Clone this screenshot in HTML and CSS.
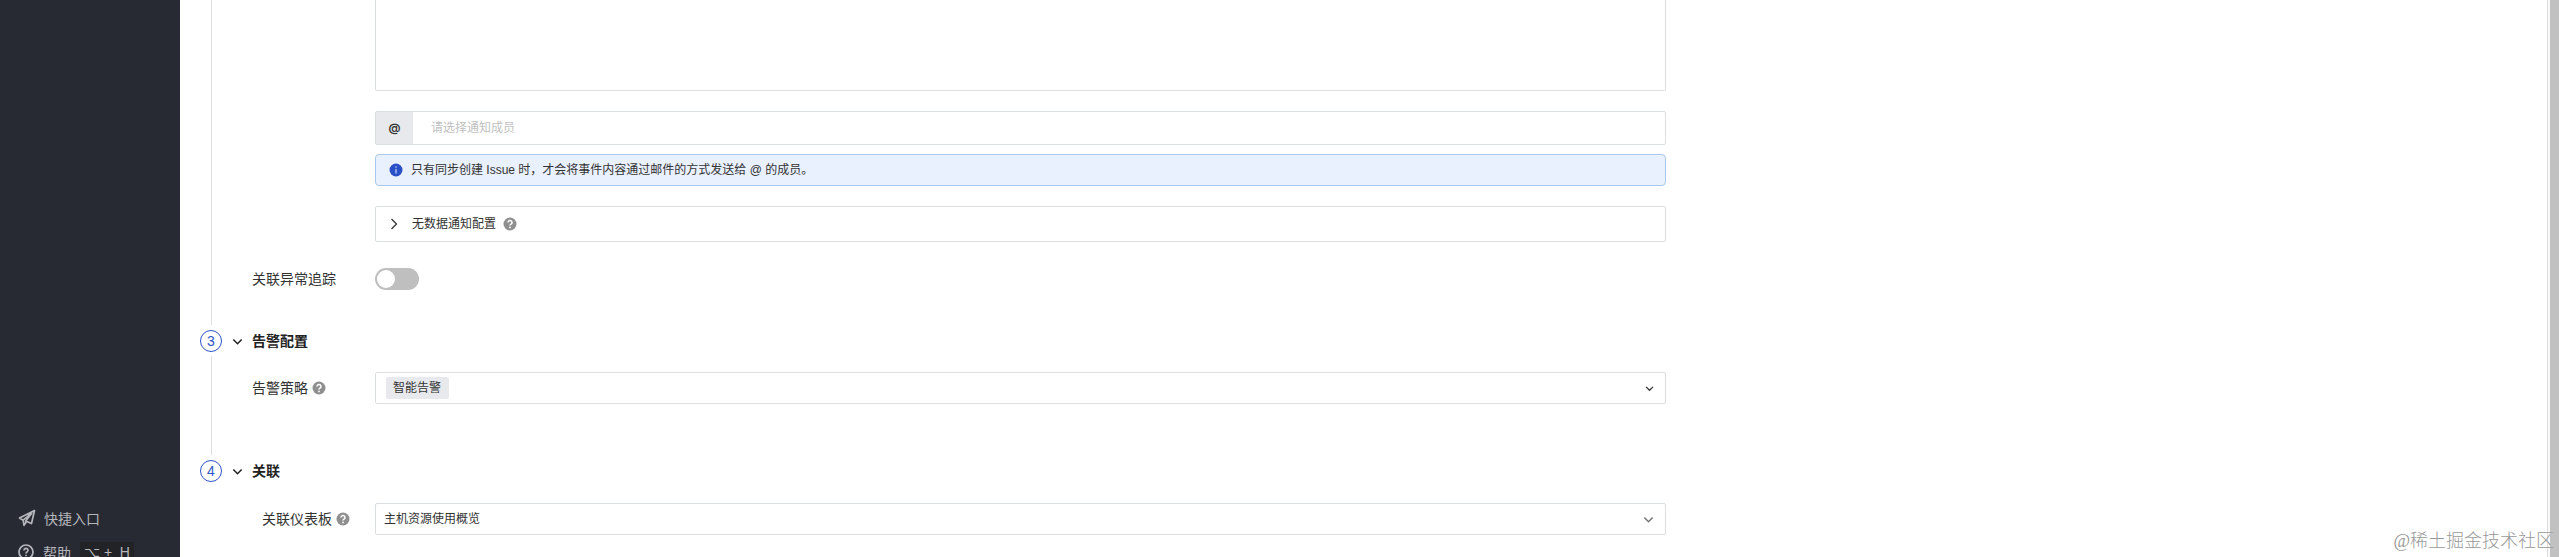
FILE: index.html
```html
<!DOCTYPE html>
<html lang="zh-CN">
<head>
  <meta charset="UTF-8" />
  <title>监控器</title>
  <link rel="stylesheet" href="styles.css">
</head>
<body>
  <svg class="sprite">
    <symbol id="help" viewBox="0 0 14 14">
      <circle cx="7" cy="7" r="6.5" fill="#8f8f8f" />
      <path d="M5 5.5a2 2 0 1 1 3 1.7c-.7.4-1 .7-1 1.3" fill="none" stroke="#fff" stroke-width="1.5" />
      <circle cx="7" cy="10.4" r=".9" fill="#fff" />
    </symbol>
    <symbol id="down" viewBox="0 0 10 10">
      <path d="M1.2 3.2 5 7l3.8-3.8" fill="none" stroke="currentColor" stroke-width="1.4" />
    </symbol>
  </svg>

  <div class="shell">
    <nav class="sidebar">
      <a href="#" class="nav-item">
        <svg width="18" height="18" viewBox="0 0 18 18" fill="none" stroke="currentColor" stroke-width="1.7" stroke-linejoin="round">
          <path d="M16.500 1.500 1.500 9l3.700 2.200 8.500-7-6 7.800 5.800 2.500zM5.200 11.200 6 16.300 8.400 12.800" />
        </svg>
        <span>快捷入口</span>
      </a>
      <a href="#" class="nav-item nav-help">
        <svg width="18" height="18" viewBox="0 0 18 18" fill="none" stroke="currentColor" stroke-width="1.7">
          <circle cx="8" cy="9" r="7" />
          <path d="M6 7.500a2 2 0 1 1 3 1.600c-.7.4-1 .8-1 1.400M8 11.800v1.400" />
        </svg>
        <span>帮助</span>
        <kbd>⌥ + &nbsp;H</kbd>
      </a>
    </nav>

    <main class="content">
      <form class="steps">
        <section class="step">
          <div class="rail"><i class="line"></i></div>
          <div class="step-body">
            <div class="row row-notify">
              <div></div>
              <div class="field">
                <textarea class="box editor" aria-label="事件内容"></textarea>
                <div class="box member">
                  <label class="addon" for="member">@</label>
                  <input type="text" id="member" placeholder="请选择通知成员">
                </div>
                <div class="notice">
                  <svg width="14" height="14" viewBox="0 0 14 14">
                    <circle cx="7" cy="7" r="6.500" fill="#2a50c8" />
                    <path d="M7 3.300v1.400M7 6v4.500" stroke="#a9c4f7" stroke-width="1.400" />
                  </svg>
                  <span>只有同步创建 Issue 时，才会将事件内容通过邮件的方式发送给 @ 的成员。</span>
                </div>
                <button type="button" class="box collapse">
                  <svg width="8" height="12" viewBox="0 0 8 12"><path d="M1.500 1 6.500 6l-5 5" fill="none" stroke="#333" stroke-width="1.300" /></svg>
                  <span>无数据通知配置</span>
                  <svg class="help"><use href="#help" /></svg>
                </button>
              </div>
            </div>
            <div class="row row-trace">
              <label class="label" for="trace">关联异常追踪</label>
              <input type="checkbox" id="trace" class="switch" role="switch">
            </div>
          </div>
        </section>

        <section class="step">
          <div class="rail"><span class="badge">3</span><i class="line"></i></div>
          <div class="step-body">
            <h2 class="step-title"><svg class="arrow"><use href="#down" /></svg>告警配置</h2>
            <div class="row row-policy">
              <label class="label" for="policy">告警策略 <svg class="help"><use href="#help" /></svg></label>
              <div class="box tags">
                <select id="policy" class="tag"><option>智能告警</option></select>
                <svg class="arrow arrow-small"><use href="#down" /></svg>
              </div>
            </div>
          </div>
        </section>

        <section class="step">
          <div class="rail"><span class="badge">4</span></div>
          <div class="step-body">
            <h2 class="step-title"><svg class="arrow"><use href="#down" /></svg>关联</h2>
            <div class="row row-dashboard">
              <label class="label label-sub" for="dashboard">关联仪表板 <svg class="help"><use href="#help" /></svg></label>
              <div class="box dashboard">
                <select id="dashboard"><option>主机资源使用概览</option></select>
                <svg class="arrow"><use href="#down" /></svg>
              </div>
            </div>
          </div>
        </section>
      </form>
    </main>
    <div class="scrollbar"></div>
  </div>
  <div class="watermark">@稀土掘金技术社区</div>
</body>
</html>
```
FILE: styles.css
```css
* {
  box-sizing: border-box;
}
body {
  margin: 0;
  font-family: "Liberation Sans", "Noto Sans CJK SC", sans-serif;
  font-size: 14px;
  color: #333;
  background: #fff;
}
input, select, textarea, button {
  font: inherit;
  font-size: 12px;
  color: inherit;
}
svg {
  flex: none;
}
.sprite {
  display: none;
}
.shell {
  display: flex;
  height: 100vh;
  overflow: hidden;
}

/* sidebar */
.sidebar {
  width: 180px;
  flex: none;
  display: flex;
  flex-direction: column;
  justify-content: flex-end;
  background: #282a33;
  margin-bottom: -12px;
}
.nav-item {
  display: flex;
  align-items: center;
  gap: 8px;
  height: 34px;
  padding-left: 18px;
  color: #b4b6bb;
  text-decoration: none;
}
.nav-help {
  gap: 7px;
}
kbd {
  font: inherit;
  line-height: 20px;
  padding: 0 4px;
  margin-left: 2px;
  background: #222327;
}

/* steps */
.content {
  flex: 1;
  padding-left: 20px;
}
.steps {
  max-width: 1466px;
}
.step {
  display: flex;
}
.rail {
  width: 22px;
  flex: none;
  display: flex;
  flex-direction: column;
  align-items: center;
}
.badge {
  width: 22px;
  height: 22px;
  line-height: 20px;
  text-align: center;
  border: 1px solid #2f54c8;
  border-radius: 50%;
  color: #2f54c8;
}
.line {
  flex: 1;
  width: 1px;
  margin: 4px 0 5px;
  background: #dcdfe1;
}
.rail .line:first-child {
  margin-top: 0;
}
.step-body {
  flex: 1;
}
.step-title {
  display: flex;
  align-items: center;
  gap: 9px;
  margin: 0 0 20px;
  padding-left: 10px;
  font-size: 14px;
  line-height: 22px;
  color: #222;
}
.arrow {
  width: 11px;
  height: 11px;
}
.arrow-small {
  width: 9px;
  height: 9px;
}
.help {
  width: 14px;
  height: 14px;
}

/* form rows */
.row {
  display: grid;
  grid-template-columns: 123px 1fr;
  padding-left: 30px;
  align-items: center;
}
.row-trace {
  padding-top: 26px;
  padding-bottom: 40px;
}
.row-policy {
  padding-bottom: 56px;
}
.row-dashboard {
  padding-top: 1px;
}
.label {
  display: flex;
  align-items: center;
  gap: 4px;
  line-height: 22px;
}
.label-sub {
  padding-left: 10px;
}
.box {
  border: 1px solid #dcdfe1;
  border-radius: 2px;
  background: #fff;
}
.field {
  display: flex;
  flex-direction: column;
}
.editor {
  height: 91px;
  border-top: 0;
  border-radius: 0 0 2px 2px;
  resize: none;
}
.member {
  display: flex;
  height: 34px;
  margin-top: 20px;
}
.addon {
  width: 37px;
  line-height: 32px;
  text-align: center;
  font-family: "Inter", sans-serif;
  font-size: 12px;
  font-weight: 600;
  background: #e7e9ec;
}
.member input {
  flex: 1;
  border: 0;
  padding: 0 18px;
  background: none;
}
.member input::placeholder {
  color: #bfbfbf;
}
.notice {
  display: flex;
  align-items: center;
  gap: 8px;
  height: 32px;
  margin-top: 9px;
  padding: 0 13px;
  font-size: 12px;
  line-height: 18px;
  background: #e9f0fe;
  border: 1px solid #a9c7ee;
  border-radius: 4px;
}
.collapse {
  display: flex;
  align-items: center;
  height: 36px;
  margin-top: 20px;
  padding: 0 14px;
}
.collapse span {
  line-height: 18px;
  margin: 0 7px 0 14px;
}
.switch {
  appearance: none;
  width: 44px;
  height: 22px;
  margin: 0;
  padding: 2px;
  border-radius: 11px;
  background: #bfbfbf;
}
.switch::before {
  content: "";
  display: block;
  width: 18px;
  height: 18px;
  border-radius: 50%;
  background: #fff;
}
.switch:checked {
  background: #2f54c8;
}
.switch:checked::before {
  margin-left: auto;
}
.tags,
.dashboard {
  display: flex;
  align-items: center;
  justify-content: space-between;
  height: 32px;
  padding: 0 11px 0 10px;
}
.tags select,
.dashboard select {
  appearance: none;
  border: 0;
  background: none;
}
.tags .tag {
  height: 22px;
  padding: 0 7px;
  border-radius: 2px;
  background: #e7e9ec;
}
.dashboard select {
  flex: 1;
  height: 30px;
  padding: 0;
}
.dashboard {
  padding-left: 8px;
}
.dashboard .arrow {
  color: #777;
}

.scrollbar {
  width: 12px;
  flex: none;
  background: #c1c1c1;
  border-left: 1px solid #ddd;
  box-shadow: inset 2px 0 #fafafa;
}
.watermark {
  position: absolute;
  right: 5px;
  bottom: 3px;
  font-family: "Liberation Serif", "Noto Sans CJK SC", serif;
  font-size: 18px;
  font-weight: 300;
  line-height: 26px;
  color: #999;
}
```
